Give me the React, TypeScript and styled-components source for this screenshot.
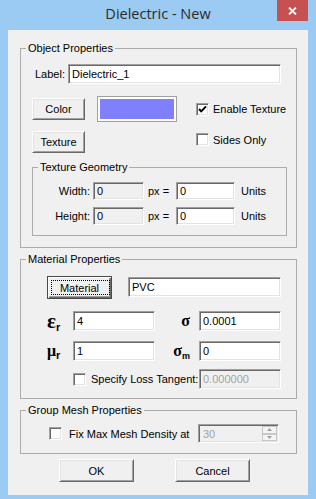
import React from 'react';
import styled, { createGlobalStyle } from 'styled-components';

const Global = createGlobalStyle`
  html, body { margin: 0; padding: 0; background: #9bcaf2; }
  body { font-family: "Liberation Sans", Arial, sans-serif; font-size: 11px; color: #000; }
  * { box-sizing: border-box; }
`;

const Window = styled.div`
  width: 316px;
  height: 499px;
  background: #9bcaf2;
  display: flex;
  flex-direction: column;
  padding: 0 8px 4px;
`;

const TitleBar = styled.div`
  height: 30px;
  flex: none;
  display: grid;
  grid-template-columns: 1fr auto 1fr;
  align-items: start;
`;

const Title = styled.div`
  grid-column: 2;
  padding-top: 4px;
  font-family: "Segoe UI", "Open Sans", "Noto Sans", sans-serif;
  font-size: 14.5px;
  line-height: 20px;
  color: #2b2b2b;
`;

const Close = styled.div`
  grid-column: 3;
  justify-self: end;
  width: 31px;
  height: 21px;
  background: #c75050;
  display: flex;
  align-items: center;
  justify-content: center;
`;

const Client = styled.div`
  flex: 1;
  background: #f0f0f0;
  display: flex;
  flex-direction: column;
  padding: 12px 11px 0 12px;
`;

const Group = styled.fieldset<{ $w: number; $mt?: number }>`
  margin: ${(p) => p.$mt ?? 0}px 0 0 0;
  padding: 0;
  min-width: 0;
  width: ${(p) => p.$w}px;
  border: 1px solid #acacac;
`;

const Legend = styled.legend`
  margin-left: 5px;
  padding: 0 2px;
  font-size: 11px;
  line-height: 13px;
`;

const Body = styled.div<{ $pad: string }>`
  display: flex;
  flex-direction: column;
  padding: ${(p) => p.$pad};
`;

const Row = styled.div<{ $h: number; $mt?: number; $align?: string }>`
  display: flex;
  align-items: ${(p) => p.$align ?? 'center'};
  height: ${(p) => p.$h}px;
  margin-top: ${(p) => p.$mt ?? 0}px;
`;

const Text = styled.span<{ $w?: number; $ml?: number; $right?: boolean }>`
  display: inline-block;
  white-space: nowrap;
  ${(p) => (p.$w ? `width: ${p.$w}px;` : '')}
  margin-left: ${(p) => p.$ml ?? 0}px;
  text-align: ${(p) => (p.$right ? 'right' : 'left')};
`;

const Field = styled.input<{ $w: number; $h?: number; $ml?: number; $mt?: number; $muted?: boolean }>`
  width: ${(p) => p.$w}px;
  height: ${(p) => p.$h ?? 20}px;
  margin: ${(p) => p.$mt ?? 0}px 0 0 ${(p) => p.$ml ?? 0}px;
  border: 1px solid;
  border-color: #a0a0a0 #ffffff #ffffff #a0a0a0;
  box-shadow: inset 1px 1px 0 #696969, inset -1px -1px 0 #e3e3e3;
  background: ${(p) => (p.readOnly || p.disabled ? '#f0f0f0' : '#ffffff')};
  color: ${(p) => (p.$muted ? '#a3a3a3' : '#000')};
  font-family: "Liberation Sans", Arial, sans-serif;
  font-size: 11px;
  padding: 0 0 0 3px;
  outline: none;
  flex: none;
  &:disabled { color: #a3a3a3; background: #f0f0f0; }
`;

const Btn = styled.div<{ $w: number; $h?: number }>`
  width: ${(p) => p.$w}px;
  height: ${(p) => p.$h ?? 22}px;
  flex: none;
  border: 1px solid;
  border-color: #ffffff #696969 #696969 #ffffff;
  box-shadow: inset 1px 1px 0 #e3e3e3, inset -1px -1px 0 #a0a0a0;
  background: #f0f0f0;
  display: flex;
  align-items: center;
  justify-content: center;
  font-size: 11px;
`;

const DefaultBtn = styled.div`
  position: relative;
  width: 65px;
  height: 23px;
  flex: none;
  border: 1px solid #4a4a4a;
  box-shadow: inset 1px 1px 0 #ffffff, inset -1px -1px 0 #696969, inset -2px -2px 0 #a0a0a0;
  background: #f0f0f0;
  display: flex;
  align-items: center;
  justify-content: center;
  font-size: 11px;
  &::after {
    content: '';
    position: absolute;
    left: 3px;
    top: 3px;
    right: 1px;
    bottom: 3px;
    border: 1px dotted #000;
  }
`;

const Swatch = styled.div<{ $color: string }>`
  width: 80px;
  height: 26px;
  border: 1px solid #a0a0a0;
  padding: 2px;
  background: #fff;
  display: flex;
  &::before {
    content: '';
    flex: 1;
    background: ${(p) => p.$color};
  }
`;

const TexGrid = styled.div`
  display: grid;
  grid-template-columns: 65px 99px auto;
  grid-template-rows: 26px 22px;
  row-gap: 9px;
  align-items: center;
  margin-top: 12px;
`;

const Cell = styled.div<{ $col?: number; $top?: number }>`
  display: flex;
  ${(p) => (p.$col ? `grid-column: ${p.$col};` : '')}
  ${(p) => (p.$top !== undefined ? `align-self: start; margin-top: ${p.$top}px;` : '')}
`;

const CheckWrap = styled.label<{ $gap?: number }>`
  display: flex;
  align-items: center;
  gap: ${(p) => p.$gap ?? 4}px;
  white-space: nowrap;
`;

const Box = styled.span`
  width: 13px;
  height: 13px;
  flex: none;
  border: 1px solid;
  border-color: #a0a0a0 #ffffff #ffffff #a0a0a0;
  box-shadow: inset 1px 1px 0 #696969, inset -1px -1px 0 #e3e3e3;
  background: #fff;
  display: flex;
`;

const Sym = styled.span<{ $w: number; $right?: boolean }>`
  width: ${(p) => p.$w}px;
  flex: none;
  display: flex;
  align-items: baseline;
  justify-content: ${(p) => (p.$right ? 'flex-end' : 'flex-start')};
  padding-right: ${(p) => (p.$right ? 9 : 0)}px;
`;

const Greek = styled.span<{ $size: number }>`
  font-family: "Liberation Serif", "DejaVu Serif", serif;
  font-weight: bold;
  font-size: ${(p) => p.$size}px;
  line-height: 1;
`;

const Sub = styled.span`
  font-family: "Liberation Sans", Arial, sans-serif;
  font-weight: bold;
  font-size: 11px;
  position: relative;
  top: 3px;
`;

const Spin = styled.div`
  width: 81px;
  height: 19px;
  margin-left: auto;
  border: 1px solid;
  border-color: #a0a0a0 #ffffff #ffffff #a0a0a0;
  box-shadow: inset 1px 1px 0 #696969, inset -1px -1px 0 #e3e3e3;
  background: #f0f0f0;
  color: #a3a3a3;
  display: flex;
  align-items: center;
  padding: 0 1px 0 4px;
`;

const SpinValue = styled.span`
  flex: 1;
`;

const SpinCol = styled.div`
  width: 15px;
  height: 15px;
  display: flex;
  flex-direction: column;
`;

const SpinPart = styled.div`
  flex: 1;
  border: 1px solid #c8c8c8;
  background: #f4f4f4;
  display: flex;
  align-items: center;
  justify-content: center;
`;

const ButtonRow = styled.div`
  display: flex;
  gap: 41px;
  padding-left: 39px;
  margin-top: 5px;
`;

function Check({ checked, label, gap }: { checked?: boolean; label: string; gap?: number }) {
  return (
    <CheckWrap $gap={gap}>
      <Box>
        {checked && (
          <svg width="11" height="11" viewBox="0 0 11 11">
            <path d="M2 5 L4.2 7.4 L9 2.4" stroke="#000" strokeWidth="2" fill="none" />
          </svg>
        )}
      </Box>
      <span>{label}</span>
    </CheckWrap>
  );
}

export default function App() {
  return (
    <>
      <Global />
      <Window>
        <TitleBar>
          <Title>Dielectric - New</Title>
          <Close>
            <svg width="9" height="8" viewBox="0 0 9 8">
              <path d="M1 0.5 L8 7.5 M8 0.5 L1 7.5" stroke="#fff" strokeWidth="1.8" />
            </svg>
          </Close>
        </TitleBar>
        <Client>
          <Group $w={277}>
            <Legend>Object Properties</Legend>
            <Body $pad="9px 9px 11px 11px">
              <Row $h={20}>
                <Text $ml={3} $w={33}>Label:</Text>
                <Field $w={213} defaultValue="Dielectric_1" />
              </Row>
              <TexGrid>
                <Btn $w={53}>Color</Btn>
                <Swatch $color="#8080ff" />
                <Cell>
                  <Check checked label="Enable Texture" />
                </Cell>
                <Btn $w={53}>Texture</Btn>
                <Cell $col={3} $top={2}>
                  <Check label="Sides Only" />
                </Cell>
              </TexGrid>
              <Group $w={255} $mt={8}>
                <Legend>Texture Geometry</Legend>
                <Body $pad="8px 0 10px 0">
                  <Row $h={18}>
                    <Text $w={57} $right>Width:</Text>
                    <Field $w={51} $h={18} $ml={3} readOnly defaultValue="0" />
                    <Text $w={32} $ml={0} style={{ paddingLeft: 4 }}>px =</Text>
                    <Field $w={59} $h={18} defaultValue="0" />
                    <Text $ml={6}>Units</Text>
                  </Row>
                  <Row $h={18} $mt={7}>
                    <Text $w={57} $right>Height:</Text>
                    <Field $w={51} $h={18} $ml={3} readOnly defaultValue="0" />
                    <Text $w={32} style={{ paddingLeft: 4 }}>px =</Text>
                    <Field $w={59} $h={18} defaultValue="0" />
                    <Text $ml={6}>Units</Text>
                  </Row>
                </Body>
              </Group>
            </Body>
          </Group>

          <Group $w={277} $mt={5}>
            <Legend>Material Properties</Legend>
            <Body $pad="10px 15px 9px 26px">
              <Row $h={23} $align="flex-start">
                <DefaultBtn>Material</DefaultBtn>
                <Field $w={153} $ml={16} $mt={1} defaultValue="PVC" />
              </Row>
              <Row $h={20} $mt={12}>
                <Sym $w={26}>
                  <Greek $size={21}>ε</Greek>
                  <Sub>r</Sub>
                </Sym>
                <Field $w={82} defaultValue="4" />
                <Sym $w={44} $right>
                  <Greek $size={16}>σ</Greek>
                </Sym>
                <Field $w={82} defaultValue="0.0001" />
              </Row>
              <Row $h={20} $mt={10}>
                <Sym $w={26}>
                  <Greek $size={16}>μ</Greek>
                  <Sub>r</Sub>
                </Sym>
                <Field $w={82} defaultValue="1" />
                <Sym $w={44} $right>
                  <Greek $size={16}>σ</Greek>
                  <Sub style={{ fontSize: 9 }}>m</Sub>
                </Sym>
                <Field $w={82} defaultValue="0" />
              </Row>
              <Row $h={20} $mt={8}>
                <Text $ml={26}>
                  <Check label="Specify Loss Tangent:" gap={5} />
                </Text>
                <Field $w={82} $ml={0} style={{ marginLeft: 'auto' }} disabled $muted defaultValue="0.000000" />
              </Row>
            </Body>
          </Group>

          <Group $w={277} $mt={5}>
            <Legend>Group Mesh Properties</Legend>
            <Body $pad="7px 17px 10px 28px">
              <Row $h={19}>
                <Check label="Fix Max Mesh Density at" gap={7} />
                <Spin>
                  <SpinValue>30</SpinValue>
                  <SpinCol>
                    <SpinPart>
                      <svg width="5" height="3" viewBox="0 0 5 3"><path d="M0 3 L2.5 0 L5 3 Z" fill="#a0a0a0" /></svg>
                    </SpinPart>
                    <SpinPart>
                      <svg width="5" height="3" viewBox="0 0 5 3"><path d="M0 0 L2.5 3 L5 0 Z" fill="#a0a0a0" /></svg>
                    </SpinPart>
                  </SpinCol>
                </Spin>
              </Row>
            </Body>
          </Group>

          <ButtonRow>
            <Btn $w={75} $h={23}>OK</Btn>
            <Btn $w={75} $h={23}>Cancel</Btn>
          </ButtonRow>
        </Client>
      </Window>
    </>
  );
}
